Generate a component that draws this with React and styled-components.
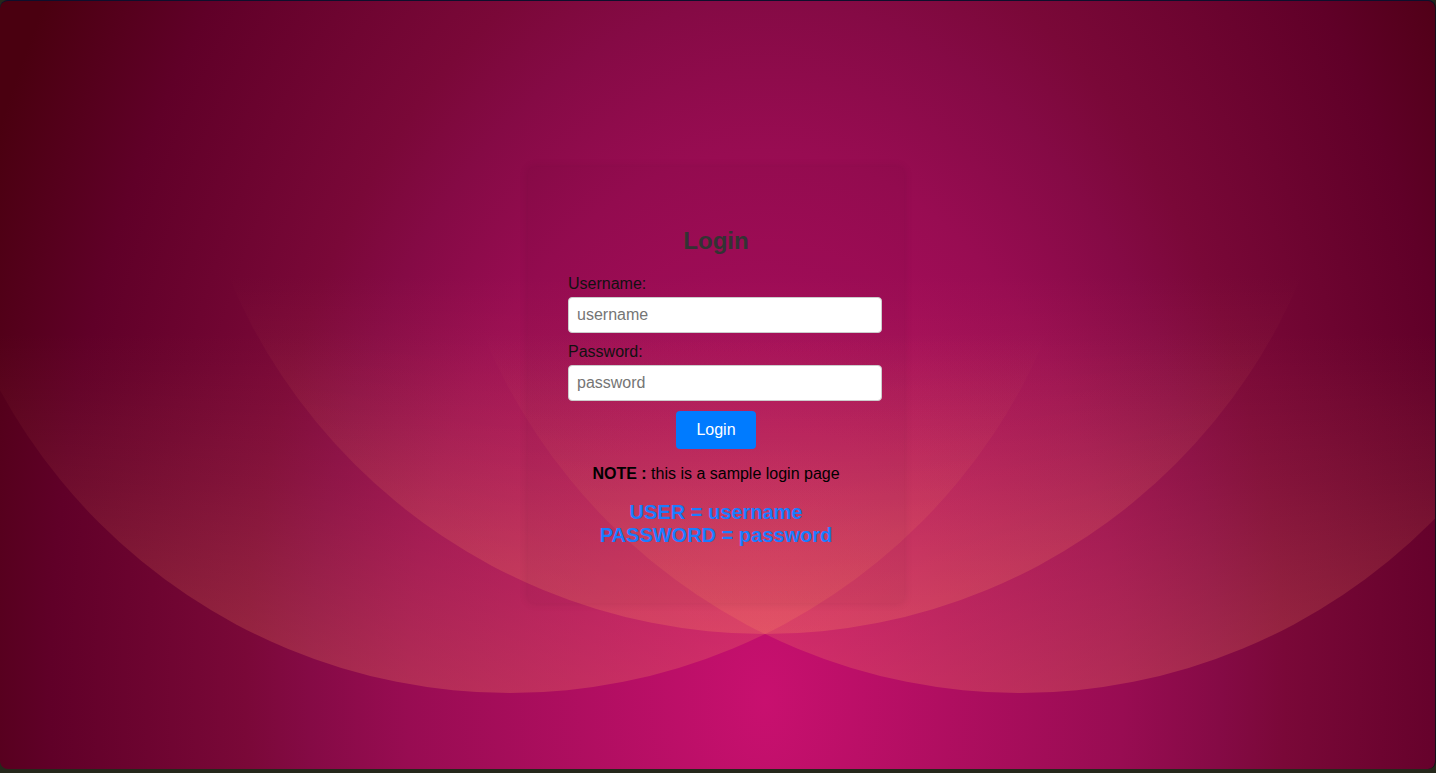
import React from 'react';
import styled, { createGlobalStyle } from 'styled-components';

const GlobalStyle = createGlobalStyle`
  html, body {
    margin: 0;
    padding: 0;
    background: #25281b;
  }

  body {
    font-family: "Liberation Sans", Arial, sans-serif;
  }
`;

const Frame = styled.div`
  position: relative;
  box-sizing: border-box;
  height: 769px;
  border-top: 1px solid #0d0f2c;
  border-right: 1px solid #14101c;
  border-radius: 8px;
  overflow: hidden;
  display: flex;
  align-items: center;
  justify-content: center;
  padding-right: 3px;
  background: radial-gradient(
    ellipse 650px 1000px at 765px 700px,
    #c8106f 0%,
    #980c52 55%,
    #850a45 70%,
    #7a0838 80%,
    #600028 110%,
    #4a0010 131%
  );
`;

// decorative arcs behind the card
const Backdrop = styled.svg`
  position: absolute;
  top: 0;
  left: 0;
  width: 100%;
  height: 100%;
  pointer-events: none;
`;

const Card = styled.div`
  position: relative;
  width: 336px;
  padding: 20px;
  border-radius: 6px;
  background: rgba(0, 0, 0, 0.03);
  box-shadow: 0 0 10px rgba(0, 0, 0, 0.1);
`;

const Form = styled.form`
  padding: 20px;
  margin: 0;
`;

const Title = styled.h2`
  margin: 20px 0;
  font-size: 24px;
  font-weight: bold;
  color: #333;
  text-align: center;
`;

const Label = styled.label`
  display: block;
  margin-bottom: 4px;
  font-size: 16px;
  color: #111;
`;

const Input = styled.input`
  display: block;
  width: 100%;
  height: 18px;
  margin: 0 0 10px;
  padding: 8px;
  border: 1px solid #ccc;
  border-radius: 4px;
  background: #fff;
  font-family: "Liberation Sans", Arial, sans-serif;
  font-size: 16px;
  line-height: 18px;
  color: #222;
  outline: none;

  &::placeholder {
    color: #757575;
  }
`;

const ButtonRow = styled.div`
  display: flex;
  justify-content: center;
`;

const Button = styled.button`
  height: 38px;
  padding: 0 20px;
  border: none;
  border-radius: 4px;
  background: #007bff;
  color: #fff;
  font-family: "Liberation Sans", Arial, sans-serif;
  font-size: 16px;
  cursor: pointer;
`;

const Note = styled.p`
  margin: 16px 0 0;
  font-size: 16px;
  color: #000;
  text-align: center;
`;

const Credentials = styled.div`
  margin: 18px 0 16px;
  font-size: 20px;
  font-weight: bold;
  line-height: 23px;
  color: #1a7dff;
  text-align: center;
`;

const arcs = [
  { cx: 510, cy: 111 },
  { cx: 765, cy: 52 },
  { cx: 1020, cy: 111 },
];

const App = () => {
  const handleSubmit = (e) => {
    e.preventDefault();
  };

  return (
    <>
      <GlobalStyle />
      <Frame>
        <Backdrop viewBox="0 0 1435 768" preserveAspectRatio="none">
          <defs>
            <linearGradient id="glow" x1="0" y1="0" x2="0" y2="1">
              <stop offset="0.69" stopColor="#ff9060" stopOpacity="0" />
              <stop offset="0.82" stopColor="#ff9060" stopOpacity="0.09" />
              <stop offset="1" stopColor="#ff9060" stopOpacity="0.25" />
            </linearGradient>
          </defs>
          {arcs.map((a) => (
            <circle key={a.cx} cx={a.cx} cy={a.cy} r="581" fill="url(#glow)" />
          ))}
        </Backdrop>
        <Card>
          <Form onSubmit={handleSubmit}>
            <Title>Login</Title>
            <Label htmlFor="username">Username:</Label>
            <Input id="username" type="text" placeholder="username" />
            <Label htmlFor="password">Password:</Label>
            <Input id="password" type="password" placeholder="password" />
            <ButtonRow>
              <Button type="submit">Login</Button>
            </ButtonRow>
            <Note>
              <b>NOTE :</b> this is a sample login page
            </Note>
            <Credentials>
              USER = username
              <br />
              PASSWORD = password
            </Credentials>
          </Form>
        </Card>
      </Frame>
    </>
  );
};

export default App;
